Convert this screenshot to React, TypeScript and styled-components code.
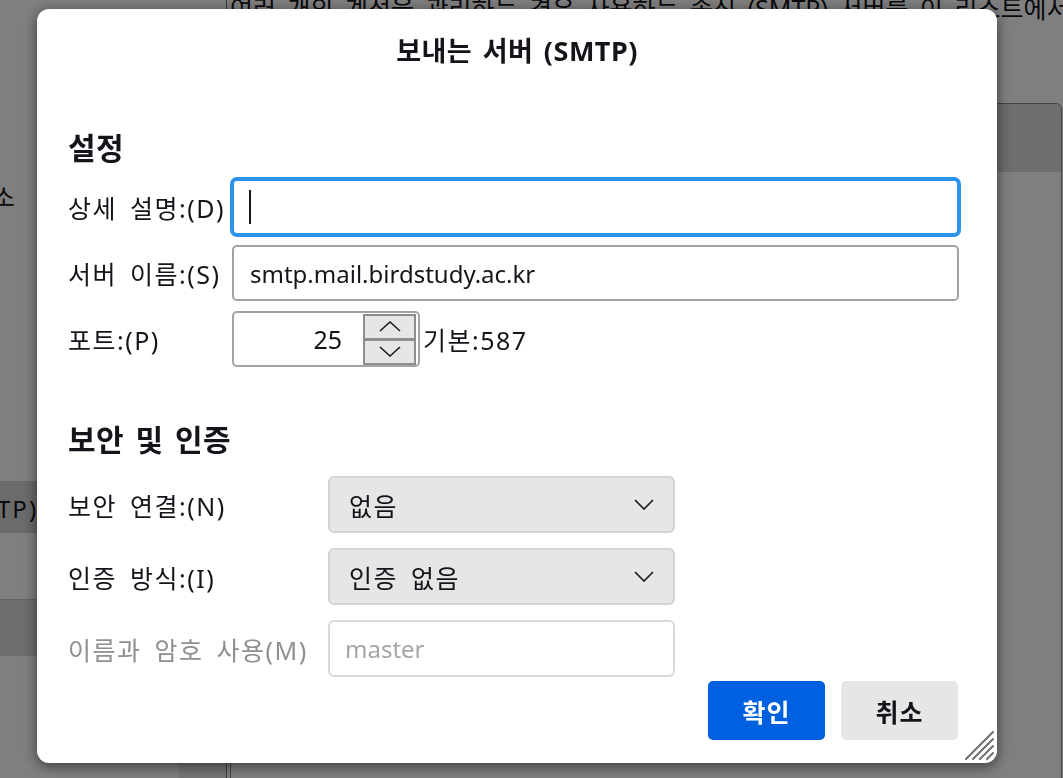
import React from "react";
import styled, { createGlobalStyle, css } from "styled-components";

const GlobalStyle = createGlobalStyle`
  html, body { margin: 0; padding: 0; width: 100%; height: 100%; overflow: hidden; }
  body {
    font-family: "Noto Sans", "Noto Sans CJK KR", sans-serif;
    background: #ffffff;
    color: #15141a;
  }
  #root { height: 100%; }
  *, *::before, *::after { box-sizing: border-box; }
`;

/* wider tracking, like the Malgun Gothic UI text of the reference */
const uiText = css`
  font-size: 25px;
  letter-spacing: 1.5px;
  word-spacing: 5px;
`;

/* ---------- page behind the modal ---------- */

const Page = styled.div`
  display: flex;
  width: 100%;
  height: 100vh;
  overflow: hidden;
  background: #ffffff;
`;

const Sidebar = styled.nav`
  flex: none;
  width: 227px;
  border-right: 1px solid #767676;
  display: flex;
  flex-direction: column;
  overflow: hidden;
`;

const SideList = styled.ul`
  list-style: none;
  margin: 0 0 0 -188px;
  padding: 65px 0 0;
  width: 420px;
`;

const SideItem = styled.li<{ $child?: boolean; $selected?: boolean }>`
  height: 52px;
  display: flex;
  align-items: center;
  padding-left: ${(p) => (p.$child ? 68 : 0)}px;
  font-size: 24px;
  letter-spacing: 2px;
  white-space: nowrap;
  background: ${(p) => (p.$selected ? "#d6d6d6" : "transparent")};
`;

const SideFooter = styled.div`
  margin: 66px 0 0 0;
  height: 57px;
  background: #dcdcdc;
  border-top: 1px solid #c2c2c2;
`;

const SideActions = styled.div`
  margin-top: auto;
  display: flex;
  justify-content: flex-end;
`;

const SideActionButton = styled.div`
  width: 47px;
  height: 40px;
  background: #ebebeb;
`;

const Content = styled.main`
  flex: 1;
  min-width: 0;
  display: flex;
  flex-direction: column;
  padding: 0 1px 0 3px;
`;

const Intro = styled.p`
  margin: -4px 0 0;
  font-size: 25px;
  line-height: 25px;
  word-spacing: 5px;
  white-space: nowrap;
`;

const ServerList = styled.section`
  flex: 1;
  margin-top: 82px;
  border: 1px solid #8a8a8a;
  border-bottom: none;
  border-radius: 6px 6px 0 0;
  display: flex;
  flex-direction: column;
  overflow: hidden;
`;

const ListHeader = styled.div`
  height: 68px;
  background: #dcdcdc;
`;

/* ---------- modal ---------- */

const Overlay = styled.div`
  position: fixed;
  inset: 0;
  background: rgba(0, 0, 0, 0.5);
  display: flex;
  align-items: flex-start;
  padding: 9px 0 0 37px;
`;

const Dialog = styled.div`
  position: relative;
  width: 960px;
  background: #ffffff;
  border-radius: 12px;
  box-shadow: 0 3px 14px rgba(0, 0, 0, 0.55);
  overflow: hidden;
  display: flex;
  flex-direction: column;
  padding-bottom: 23px;
`;

const Title = styled.h1`
  margin: 24px 0 0;
  height: 36px;
  line-height: 36px;
  text-align: center;
  font-size: 27px;
  font-weight: 700;
  letter-spacing: 0.5px;
  word-spacing: 3px;
`;

const Body = styled.div`
  display: flex;
  flex-direction: column;
  padding: 0 38px 0 31px;
`;

const SectionHeading = styled.h2<{ $top: number; $bottom: number }>`
  margin: ${(p) => p.$top}px 0 ${(p) => p.$bottom}px;
  line-height: 36px;
  font-size: 30px;
  font-weight: 700;
  letter-spacing: 0.5px;
  word-spacing: 3px;
`;

const FormGrid = styled.div<{ $label: number; $field: string; $row: number; $gap: number }>`
  display: grid;
  grid-template-columns: ${(p) => p.$label}px ${(p) => p.$field};
  grid-auto-rows: ${(p) => p.$row}px;
  row-gap: ${(p) => p.$gap}px;
  align-items: center;
`;

const Label = styled.label<{ $disabled?: boolean }>`
  ${uiText};
  white-space: nowrap;
  color: ${(p) => (p.$disabled ? "#8f8f8f" : "#15141a")};
`;

const FieldWrap = styled.div`
  position: relative;
  height: 100%;
`;

const TextInput = styled.input<{ $focused?: boolean; $disabled?: boolean }>`
  width: 100%;
  height: 100%;
  margin: 0;
  font-family: inherit;
  font-size: 24px;
  color: #15141a;
  background: #ffffff;
  padding: 0 ${(p) => (p.$disabled ? 15 : 16)}px;
  border: 2px solid
    ${(p) => (p.$focused ? "#2b93e9" : p.$disabled ? "#d9d9d9" : "#a3a3a3")};
  border-radius: ${(p) => (p.$disabled ? 6 : 5)}px;
  box-shadow: ${(p) => (p.$focused ? "0 0 0 2px #2b93e9" : "none")};
  outline: none;
  &::placeholder { color: #a6a6a6; }
`;

const Caret = styled.span`
  position: absolute;
  left: 17px;
  top: 11px;
  width: 2px;
  height: 34px;
  background: #15141a;
`;

const PortRow = styled.div`
  display: flex;
  align-items: center;
  gap: 3px;
  height: 100%;
`;

const PortBox = styled.div`
  width: 188px;
  height: 100%;
  border: 2px solid #a3a3a3;
  border-radius: 5px;
  display: flex;
  align-items: center;
  padding: 0 2px 0 0;
`;

const PortInput = styled.input`
  flex: 1;
  min-width: 0;
  height: 100%;
  border: none;
  outline: none;
  background: transparent;
  font-family: inherit;
  font-size: 25px;
  color: #15141a;
  text-align: right;
  padding: 0 21px 0 0;
`;

const SpinBox = styled.div`
  width: 53px;
  height: 51px;
  border: 2px solid #8e8e8e;
  background: #e6e6e6;
  display: flex;
  flex-direction: column;
`;

const SpinButton = styled.button<{ $up?: boolean }>`
  flex: 1;
  display: flex;
  align-items: center;
  justify-content: center;
  padding: 0;
  border: none;
  border-bottom: ${(p) => (p.$up ? "3px solid #8e8e8e" : "none")};
  background: transparent;
`;

const Hint = styled.span`
  ${uiText};
  white-space: nowrap;
`;

const SelectBox = styled.button`
  width: 100%;
  height: 100%;
  display: flex;
  align-items: center;
  justify-content: space-between;
  padding: 0 19px;
  background: #e6e6e6;
  border: 2px solid #d4d4d4;
  border-radius: 6px;
  font-family: inherit;
  ${uiText};
  color: #15141a;
`;

const ButtonRow = styled.div`
  display: flex;
  justify-content: flex-end;
  gap: 16px;
  margin-top: 4px;
  padding-right: 1px;
`;

const DialogButton = styled.button<{ $primary?: boolean }>`
  width: 117px;
  height: 59px;
  border: none;
  border-radius: 5px;
  font-family: inherit;
  font-size: 25px;
  font-weight: 700;
  letter-spacing: 1px;
  background: ${(p) => (p.$primary ? "#0061e0" : "#e6e6e6")};
  color: ${(p) => (p.$primary ? "#ffffff" : "#15141a")};
`;

const Grip = styled.svg`
  position: absolute;
  right: 3px;
  bottom: 3px;
`;

const Chevron = ({ dir }: { dir: "up" | "down" }) => (
  <svg width="22" height="11" viewBox="0 0 22 11" fill="none">
    <polyline
      points={dir === "up" ? "1,10 11,1 21,10" : "1,1 11,10 21,1"}
      stroke="#1f1f1f"
      strokeWidth="1.6"
    />
  </svg>
);

const SelectChevron = () => (
  <svg width="20" height="11" viewBox="0 0 20 11" fill="none">
    <polyline points="1,1 10,10 19,1" stroke="#1f1f1f" strokeWidth="1.7" />
  </svg>
);

export default function App() {
  return (
    <>
      <GlobalStyle />
      <Page>
        <Sidebar>
          <SideList>
            <SideItem>master</SideItem>
            <SideItem $child>서버 설정</SideItem>
            <SideItem $child>작성 및 주소</SideItem>
            <SideItem $child>정크 설정</SideItem>
            <SideItem $child>수신 확인</SideItem>
            <SideItem $child>보안</SideItem>
            <SideItem>로컬 폴더</SideItem>
            <SideItem $child>정크 설정</SideItem>
            <SideItem $selected>보내는 서버 (SMTP)</SideItem>
          </SideList>
          <SideFooter />
          <SideActions>
            <SideActionButton />
          </SideActions>
        </Sidebar>
        <Content>
          <Intro>
            여러 개의 계정을 관리하는 경우 사용하는 송신 (SMTP) 서버를 이 리스트에서 선택할 수 있습니다.
          </Intro>
          <ServerList>
            <ListHeader />
          </ServerList>
        </Content>
      </Page>

      <Overlay>
        <Dialog role="dialog" aria-label="보내는 서버 (SMTP)">
          <Title>보내는 서버 (SMTP)</Title>
          <Body>
            <SectionHeading $top={61} $bottom={13}>설정</SectionHeading>
            <FormGrid $label={164} $field="1fr" $row={56} $gap={10}>
              <Label>상세 설명:(D)</Label>
              <FieldWrap>
                <TextInput $focused readOnly defaultValue="" />
                <Caret />
              </FieldWrap>

              <Label>서버 이름:(S)</Label>
              <FieldWrap>
                <TextInput readOnly defaultValue="smtp.mail.birdstudy.ac.kr" />
              </FieldWrap>

              <Label>포트:(P)</Label>
              <PortRow>
                <PortBox>
                  <PortInput readOnly defaultValue="25" />
                  <SpinBox>
                    <SpinButton $up aria-label="증가">
                      <Chevron dir="up" />
                    </SpinButton>
                    <SpinButton aria-label="감소">
                      <Chevron dir="down" />
                    </SpinButton>
                  </SpinBox>
                </PortBox>
                <Hint>기본:587</Hint>
              </PortRow>
            </FormGrid>

            <SectionHeading $top={55} $bottom={18}>보안 및 인증</SectionHeading>
            <FormGrid $label={260} $field="347px" $row={57} $gap={15}>
              <Label>보안 연결:(N)</Label>
              <SelectBox>
                <span>없음</span>
                <SelectChevron />
              </SelectBox>

              <Label>인증 방식:(I)</Label>
              <SelectBox>
                <span>인증 없음</span>
                <SelectChevron />
              </SelectBox>

              <Label $disabled>이름과 암호 사용(M)</Label>
              <FieldWrap>
                <TextInput $disabled disabled placeholder="master" />
              </FieldWrap>
            </FormGrid>

            <ButtonRow>
              <DialogButton $primary>확인</DialogButton>
              <DialogButton>취소</DialogButton>
            </ButtonRow>
          </Body>
          <Grip width="30" height="30" viewBox="0 0 30 30">
            <g stroke="#6e6e6e" strokeWidth="2" strokeLinecap="round">
              <line x1="2" y1="29" x2="29" y2="2" />
              <line x1="9" y1="29" x2="29" y2="9" />
              <line x1="16" y1="29" x2="29" y2="16" />
              <line x1="23" y1="29" x2="29" y2="23" />
            </g>
          </Grip>
        </Dialog>
      </Overlay>
    </>
  );
}
